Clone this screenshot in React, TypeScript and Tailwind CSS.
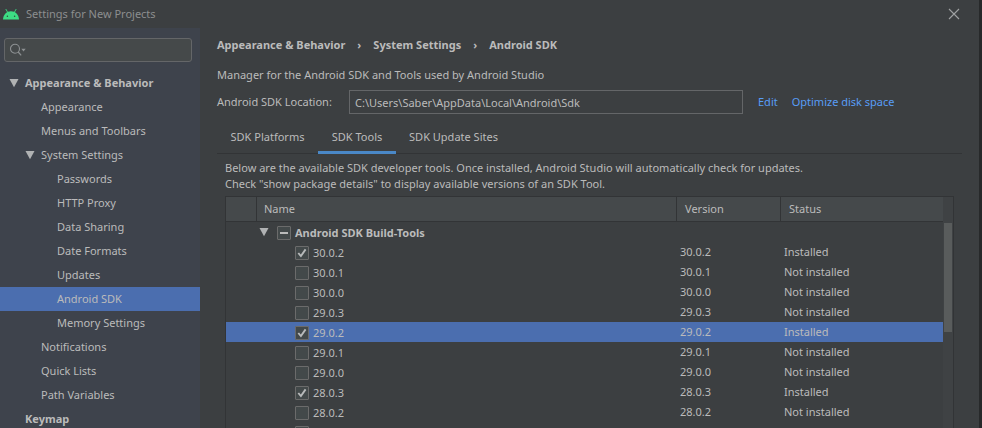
import { useEffect, useRef, useState } from "react";

type TreeItem = { label: string; level: 0 | 1 | 2; bold?: boolean; open?: boolean; selected?: boolean };

const tree: TreeItem[] = [
  { label: "Appearance & Behavior", level: 0, bold: true, open: true },
  { label: "Appearance", level: 1 },
  { label: "Menus and Toolbars", level: 1 },
  { label: "System Settings", level: 1, open: true },
  { label: "Passwords", level: 2 },
  { label: "HTTP Proxy", level: 2 },
  { label: "Data Sharing", level: 2 },
  { label: "Date Formats", level: 2 },
  { label: "Updates", level: 2 },
  { label: "Android SDK", level: 2, selected: true },
  { label: "Memory Settings", level: 2 },
  { label: "Notifications", level: 1 },
  { label: "Quick Lists", level: 1 },
  { label: "Path Variables", level: 1 },
  { label: "Keymap", level: 0, bold: true },
];

const indent = { 0: "pl-[9px]", 1: "pl-[25px]", 2: "pl-[41px]" };

const packages = [
  { version: "30.0.2", installed: true },
  { version: "30.0.1", installed: false },
  { version: "30.0.0", installed: false },
  { version: "29.0.3", installed: false },
  { version: "29.0.2", installed: true },
  { version: "29.0.1", installed: false },
  { version: "29.0.0", installed: false },
  { version: "28.0.3", installed: true },
  { version: "28.0.2", installed: false },
  { version: "28.0.1", installed: false },
];

const selectedVersion = "29.0.2";

function Arrow() {
  return (
    <svg width="10" height="9" viewBox="0 0 10 9" className="block shrink-0" aria-hidden="true">
      <path d="M0.5 0h9L5 8.2z" fill="#b0b2b3" />
    </svg>
  );
}

function AndroidLogo() {
  return (
    <svg width="16" height="11" viewBox="0 0 16 11" className="block shrink-0" aria-hidden="true">
      <path d="M3 0.4l1.7 3M13 0.4l-1.7 3" stroke="#3ddc84" strokeWidth="0.9" strokeLinecap="round" />
      <path d="M0 10.5C0.3 5.4 3.6 2.2 8 2.2s7.7 3.2 8 8.3z" fill="#3ddc84" />
      <circle cx="4.4" cy="7.3" r="0.75" fill="#2f4a3c" />
      <circle cx="11.6" cy="7.3" r="0.75" fill="#2f4a3c" />
    </svg>
  );
}

function Check({ id, checked, mixed, onChange }: { id: string; checked: boolean; mixed?: boolean; onChange?: () => void }) {
  const ref = useRef<HTMLInputElement>(null);
  useEffect(() => {
    if (ref.current) ref.current.indeterminate = Boolean(mixed);
  }, [mixed]);
  return (
    <span className="relative block size-[14px] shrink-0">
      <input
        ref={ref}
        id={id}
        type="checkbox"
        checked={checked}
        onChange={() => onChange?.()}
        className="block size-[14px] appearance-none rounded-[1px] border border-[#6b6b6b] bg-[#43494a]"
      />
      {(checked || mixed) && (
        <svg viewBox="0 0 14 14" className="pointer-events-none absolute inset-0 size-[14px]" aria-hidden="true">
          {mixed ? (
            <path d="M3 7h8" stroke="#bbbbbb" strokeWidth="2" />
          ) : (
            <path d="M3.3 7l2.6 3L10.6 3.4" stroke="#b8babb" strokeWidth="1.9" fill="none" />
          )}
        </svg>
      )}
    </span>
  );
}

function Sidebar() {
  return (
    <aside className="w-[200px] shrink-0 bg-[#3e434c]">
      <div className="px-1 pt-[10px] pb-[9px]">
        <label className="flex h-6 w-[188px] items-center rounded-[3px] border border-[#646668] bg-[#45494a] pl-[5px]">
          <svg width="16" height="14" viewBox="0 0 16 14" className="block shrink-0" aria-hidden="true">
            <circle cx="5" cy="5.8" r="4.5" fill="none" stroke="#8d9193" strokeWidth="1.1" />
            <path d="M8.2 9l3 3.4" stroke="#8d9193" strokeWidth="1.2" />
            <path d="M11.3 5.8h4.4l-2.2 2.6z" fill="#8d9193" />
          </svg>
          <input type="text" aria-label="Search settings" className="min-w-0 flex-1 bg-transparent px-1 outline-none" />
        </label>
      </div>
      <ul>
        {tree.map((item) => (
          <li key={item.label}>
            <button
              type="button"
              className={`flex h-6 w-full items-center text-left whitespace-nowrap ${indent[item.level]} ${
                item.selected ? "bg-[#4b6eaf]" : ""
              } ${item.bold ? "font-bold" : ""}`}
            >
              <span className="w-4 shrink-0">{item.open && <Arrow />}</span>
              {item.label}
            </button>
          </li>
        ))}
      </ul>
    </aside>
  );
}

function PackageTable() {
  const [checked, setChecked] = useState(() => packages.filter((p) => p.installed).map((p) => p.version));
  const toggle = (v: string) => setChecked((c) => (c.includes(v) ? c.filter((x) => x !== v) : [...c, v]));
  const th = "border-b border-[#323436] bg-[#45494b] p-0 text-left font-normal";
  return (
    <div className="mr-2 ml-2 flex border border-b-0 border-[#323436]">
      <table className="min-w-0 flex-1 table-fixed border-separate border-spacing-0">
        <colgroup>
          <col className="w-[31px]" />
          <col />
          <col className="w-[104px]" />
          <col className="w-[162px]" />
        </colgroup>
        <thead>
          <tr className="h-[25px]">
            <th className={`${th} border-r`} aria-label="Selection" />
            <th className={`${th} border-r pl-[7px]`}>Name</th>
            <th className={`${th} border-r pl-2`}>Version</th>
            <th className={`${th} pl-2`}>Status</th>
          </tr>
        </thead>
        <tbody>
          <tr className="h-5">
            <td className="p-0" />
            <td className="p-0" colSpan={3}>
              <div className="flex h-5 items-center pt-px pl-[2px] font-bold">
                <span className="w-[18px]">
                  <Arrow />
                </span>
                <Check id="build-tools" checked={false} mixed />
                <label htmlFor="build-tools" className="pl-1">
                  Android SDK Build-Tools
                </label>
              </div>
            </td>
          </tr>
          {packages.map((p) => (
            <tr key={p.version} className={`h-5 ${p.version === selectedVersion ? "bg-[#4b6eaf]" : ""}`}>
              <td className="p-0" />
              <td className="p-0">
                <div className="flex h-5 items-center pt-px pl-[38px]">
                  <Check id={p.version} checked={checked.includes(p.version)} onChange={() => toggle(p.version)} />
                  <label htmlFor={p.version} className="pl-1">
                    {p.version}
                  </label>
                </div>
              </td>
              <td className="p-0 pl-[3px]">{p.version}</td>
              <td className="p-0 pl-[3px]">{p.installed ? "Installed" : "Not installed"}</td>
            </tr>
          ))}
        </tbody>
      </table>
      <div className="w-[10px] shrink-0 bg-[#3f4244] px-px pt-[26px]">
        <div className="h-[109px] bg-[#595c5c]" />
      </div>
    </div>
  );
}

export default function App() {
  const link = "text-[#589df6]";
  return (
    <div className="flex h-screen flex-col overflow-hidden border-r-[3px] border-[#27292a] bg-[#3c3f41] font-['Noto_Sans','Open_Sans',sans-serif] text-[11px] leading-4 text-[#bbbbbb]">
      <header className="flex h-7 shrink-0 items-center pr-[19px] pl-[3px] text-[#8c8e8f]">
        <AndroidLogo />
        <h1 className="flex-1 pl-[7px]">Settings for New Projects</h1>
        <button type="button" aria-label="Close">
          <svg width="12" height="12" viewBox="0 0 12 12" className="block" aria-hidden="true">
            <path d="M1 1l10 10M11 1L1 11" stroke="#a0a2a3" strokeWidth="1.1" />
          </svg>
        </button>
      </header>
      <div className="flex min-h-0 flex-1">
        <Sidebar />
        <main className="min-w-0 flex-1 pt-[9px] pr-[17px] pl-[17px]">
          <nav aria-label="Breadcrumb" className="flex gap-3 font-bold">
            <span>Appearance &amp; Behavior</span>
            <span>›</span>
            <span>System Settings</span>
            <span>›</span>
            <span>Android SDK</span>
          </nav>
          <p className="pt-[14px]">Manager for the Android SDK and Tools used by Android Studio</p>
          <div className="flex items-center pt-[7px]">
            <label htmlFor="location" className="w-[132px] shrink-0">
              Android SDK Location:
            </label>
            <input
              id="location"
              type="text"
              readOnly
              value="C:\Users\Saber\AppData\Local\Android\Sdk"
              className="h-6 min-w-0 flex-1 border border-[#646668] bg-transparent px-[5px] outline-none"
            />
            <div className="flex w-[219px] shrink-0 gap-[14px] pl-[15px]">
              <a href="#edit" className={link}>Edit</a>
              <a href="#optimize" className={link}>Optimize disk space</a>
            </div>
          </div>
          <div role="tablist" className="mt-[6px] flex h-[34px] border-b border-[#323436]">
            <button type="button" role="tab" aria-selected="false" className="h-[34px] w-[101px]">SDK Platforms</button>
            <button type="button" role="tab" aria-selected="true" className="h-[34px] w-[78px] border-b-3 border-[#4a88c7] pt-[3px]">SDK Tools</button>
            <button type="button" role="tab" aria-selected="false" className="h-[34px] w-[115px]">SDK Update Sites</button>
          </div>
          <p className="pt-[6px] pb-1 pl-2">
            Below are the available SDK developer tools. Once installed, Android Studio will automatically check for updates.
            <br />
            Check "show package details" to display available versions of an SDK Tool.
          </p>
          <PackageTable />
        </main>
      </div>
    </div>
  );
}
